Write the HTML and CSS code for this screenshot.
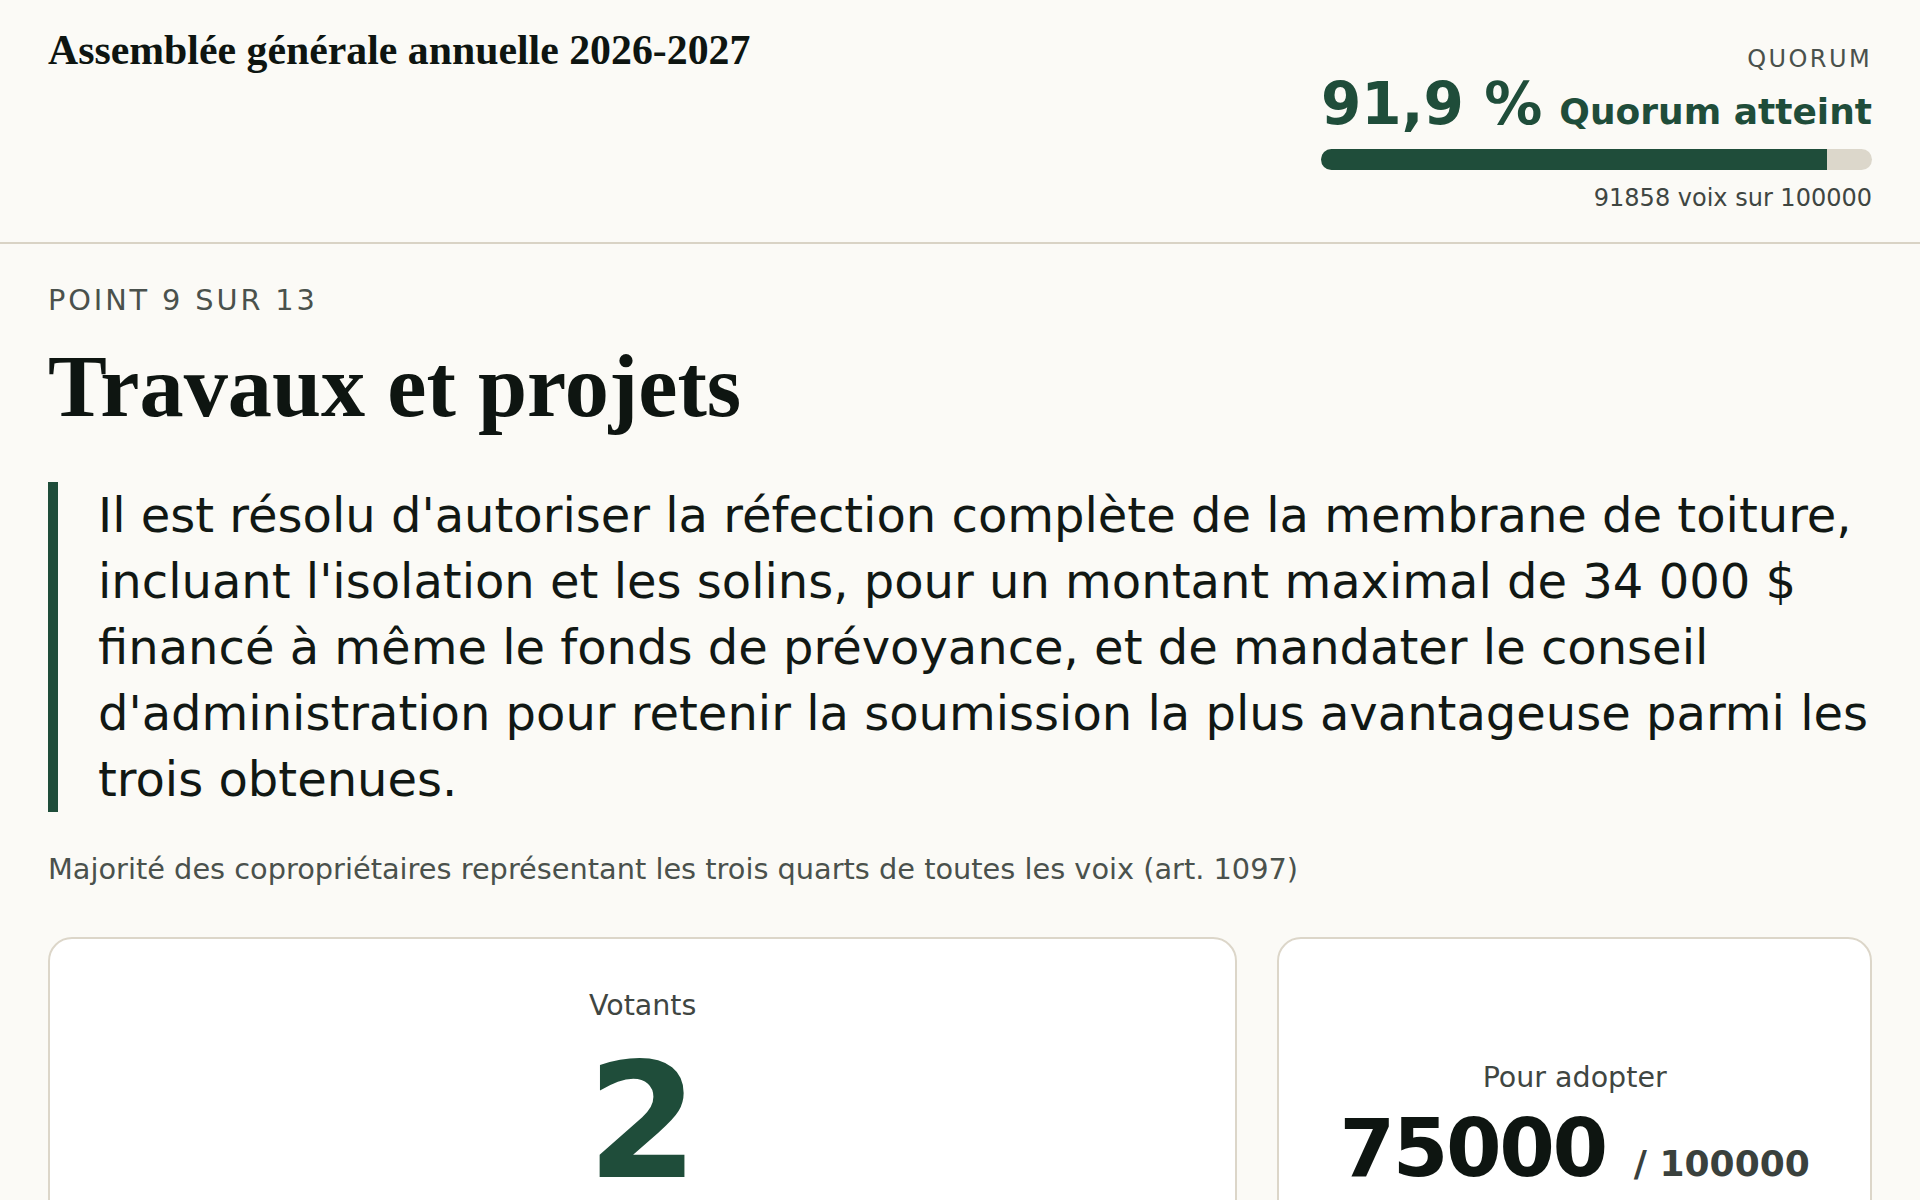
FILE: index.html
```html
<!DOCTYPE html>
<html lang="fr">
<head>
<meta charset="utf-8">
<title>Assemblée générale annuelle 2026-2027</title>
<link rel="stylesheet" href="styles.css">
</head>
<body>
<header class="topbar">
  <h1 class="assembly-title">Assemblée générale annuelle 2026-2027</h1>
  <div class="quorum">
    <div class="quorum-label">Quorum</div>
    <div class="quorum-main">
      <span class="quorum-pct">91,9 %</span>
      <span class="quorum-status">Quorum atteint</span>
    </div>
    <div class="quorum-track"><div class="quorum-fill" style="width: 91.858%"></div></div>
    <div class="quorum-count">91858 voix sur 100000</div>
  </div>
</header>
<main class="agenda">
  <div class="item-index">Point 9 sur 13</div>
  <h2 class="item-title">Travaux et projets</h2>
  <blockquote class="resolution">Il est résolu d'autoriser la réfection complète de la membrane de toiture, incluant l'isolation et les solins, pour un montant maximal de 34 000 $ financé à même le fonds de prévoyance, et de mandater le conseil d'administration pour retenir la soumission la plus avantageuse parmi les trois obtenues.</blockquote>
  <p class="majority">Majorité des copropriétaires représentant les trois quarts de toutes les voix (art. 1097)</p>
  <section class="tally">
    <div class="card">
      <div class="card-label">Votants</div>
      <div class="voters">2</div>
    </div>
    <div class="card card-center">
      <div class="card-label">Pour adopter</div>
      <div class="threshold">
        <span class="threshold-value">75000</span>
        <span class="threshold-total">/ 100000</span>
      </div>
    </div>
  </section>
</main>
</body>
</html>
```
FILE: styles.css
```css
* { box-sizing: border-box; }
html, body { margin: 0; }
body {
  background: #fbfaf6;
  color: #0e1511;
  font-family: "DejaVu Sans", sans-serif;
}
.topbar {
  display: flex;
  justify-content: space-between;
  align-items: flex-start;
  padding: 28px 48px 26px;
  border-bottom: 2px solid #d9d3c5;
}
.assembly-title {
  margin: 0;
  font-family: "Liberation Serif", serif;
  font-weight: 700;
  font-size: 41.8px;
  line-height: 1.1;
}
.quorum {
  display: flex;
  flex-direction: column;
  align-items: flex-end;
  padding-top: 17px;
}
.quorum-label {
  font-size: 24px;
  line-height: 1.2;
  letter-spacing: 0.1em;
  text-transform: uppercase;
  color: #4a514c;
}
.quorum-main {
  display: flex;
  align-items: baseline;
  gap: 17px;
  margin-top: -1px;
  line-height: 1.1;
  font-weight: 700;
  color: #1f4d3a;
}
.quorum-pct { font-size: 58px; }
.quorum-status { font-size: 36px; }
.quorum-track {
  width: 100%;
  height: 21px;
  margin-top: 12px;
  background: #dcd7cb;
  border-radius: 999px;
  overflow: hidden;
}
.quorum-fill {
  height: 100%;
  background: #1f4d3a;
}
.quorum-count {
  margin-top: 10px;
  font-size: 24px;
  line-height: 1.5;
  color: #3f4642;
}
.agenda {
  padding: 39px 48px 40px;
}
.item-index {
  font-size: 28.8px;
  line-height: 1.2;
  letter-spacing: 0.1em;
  text-transform: uppercase;
  color: #4a514c;
}
.item-title {
  margin: 21px 0 0;
  font-family: "Liberation Serif", serif;
  font-weight: 700;
  font-size: 88.3px;
  line-height: 1.1;
}
.resolution {
  margin: 47px 0 0;
  border-left: 10px solid #1f4d3a;
  padding-left: 40px;
  font-size: 48px;
  line-height: 1.375;
  color: #111814;
}
.majority {
  margin: 36px 0 0;
  font-size: 28.8px;
  line-height: 1.5;
  color: #4a514c;
}
.tally {
  margin-top: 46px;
  display: grid;
  grid-template-columns: 2fr 1fr;
  gap: 40px;
}
.card {
  background: #ffffff;
  border: 2px solid #dcd6c9;
  border-radius: 24px;
  min-height: 368.5px;
  padding: 45.5px 40px 43px;
  display: flex;
  flex-direction: column;
  align-items: center;
}
.card-center { justify-content: center; }
.card-label {
  font-size: 28.5px;
  line-height: 1.5;
  color: #3f4642;
}
.voters {
  margin-top: 14px;
  font-size: 160px;
  font-weight: 700;
  line-height: 1;
  color: #1f4d3a;
}
.threshold {
  display: flex;
  align-items: baseline;
  gap: 28px;
  margin-top: 10px;
  line-height: 1;
  font-weight: 700;
}
.threshold-value { font-size: 80px; letter-spacing: -0.03em; color: #0e1511; }
.threshold-total { font-size: 36px; color: #3a413d; }
```
